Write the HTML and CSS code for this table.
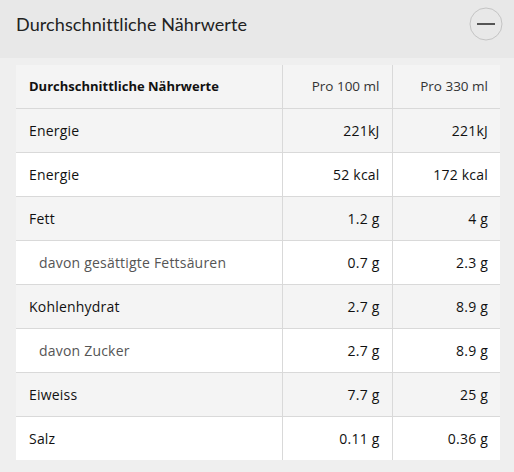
FILE: index.html
```html
<!DOCTYPE html>
<html lang="de">
<head>
<meta charset="utf-8">
<title>Durchschnittliche Nährwerte</title>
<link rel="stylesheet" href="styles.css">
</head>
<body>
<div class="panel">
  <div class="panel-head">
    <h2 class="panel-title">Durchschnittliche Nährwerte</h2>
    <button class="toggle" aria-label="Einklappen">
      <svg width="34" height="34" viewBox="0 0 34 34">
        <circle cx="17" cy="17" r="16" fill="none" stroke="#c4c4c4" stroke-width="1"/>
        <line x1="8" y1="17" x2="26" y2="17" stroke="#555" stroke-width="2"/>
      </svg>
    </button>
  </div>
  <div class="panel-body">
    <table class="nutri">
      <colgroup>
        <col class="c1"><col class="c2"><col class="c3">
      </colgroup>
      <thead>
        <tr class="alt">
          <th>Durchschnittliche Nährwerte</th>
          <th class="num">Pro 100 ml</th>
          <th class="num">Pro 330 ml</th>
        </tr>
      </thead>
      <tbody>
        <tr class="alt"><td>Energie</td><td class="num">221kJ</td><td class="num">221kJ</td></tr>
        <tr><td>Energie</td><td class="num">52 kcal</td><td class="num">172 kcal</td></tr>
        <tr class="alt"><td>Fett</td><td class="num">1.2 g</td><td class="num">4 g</td></tr>
        <tr class="sub"><td>davon gesättigte Fettsäuren</td><td class="num">0.7 g</td><td class="num">2.3 g</td></tr>
        <tr class="alt"><td>Kohlenhydrat</td><td class="num">2.7 g</td><td class="num">8.9 g</td></tr>
        <tr class="sub"><td>davon Zucker</td><td class="num">2.7 g</td><td class="num">8.9 g</td></tr>
        <tr class="alt"><td>Eiweiss</td><td class="num">7.7 g</td><td class="num">25 g</td></tr>
        <tr><td>Salz</td><td class="num">0.11 g</td><td class="num">0.36 g</td></tr>
      </tbody>
    </table>
  </div>
</div>
</body>
</html>
```
FILE: styles.css
```css
html, body {
  margin: 0;
  padding: 0;
}
body {
  background: #efefef;
  font-family: "Open Sans", "Liberation Sans", sans-serif;
  color: #111;
}
.panel-head {
  height: 58px;
  background: #e8e8e8;
  display: flex;
  align-items: center;
  justify-content: space-between;
  padding: 0 11px 0 16px;
  box-sizing: border-box;
}
.panel-title {
  margin: 0;
  margin-top: -11px;
  font-family: Lato, "Open Sans", sans-serif;
  font-size: 18px;
  font-weight: 400;
  color: #222;
  letter-spacing: 0.1px;
}
.toggle {
  margin-top: -11px;
  padding: 0;
  border: 0;
  background: transparent;
  width: 34px;
  height: 34px;
  display: block;
}
.toggle svg { display: block; }
.panel-body {
  padding: 7px 14px 12px 16px;
}
.nutri {
  width: 484px;
  border-collapse: collapse;
  table-layout: fixed;
  background: #fff;
  font-size: 14px;
  letter-spacing: 0.2px;
}
.c1 { width: 266px; }
.c2 { width: 110px; }
.c3 { width: 108px; }
.nutri th, .nutri td {
  height: 44px;
  padding: 0 12px 0 13px;
  box-sizing: border-box;
  text-align: left;
  vertical-align: middle;
  border-bottom: 1px solid #d9d9d9;
  white-space: nowrap;
  font-weight: 400;
}
.nutri th {
  height: 43px;
  font-size: 13.5px;
  letter-spacing: 0;
}
.nutri th:first-child {
  font-size: 13px;
  font-weight: 700;
  color: #111;
}
.nutri th.num { color: #333; }
.nutri th + th, .nutri td + td {
  border-left: 1px solid #d9d9d9;
}
.nutri tr:last-child td { border-bottom: 0; }
.nutri .num { text-align: right; }
.nutri tr.alt { background: #f4f4f4; }
.nutri tr.sub td:first-child {
  padding-left: 23px;
  color: #555;
}
```
